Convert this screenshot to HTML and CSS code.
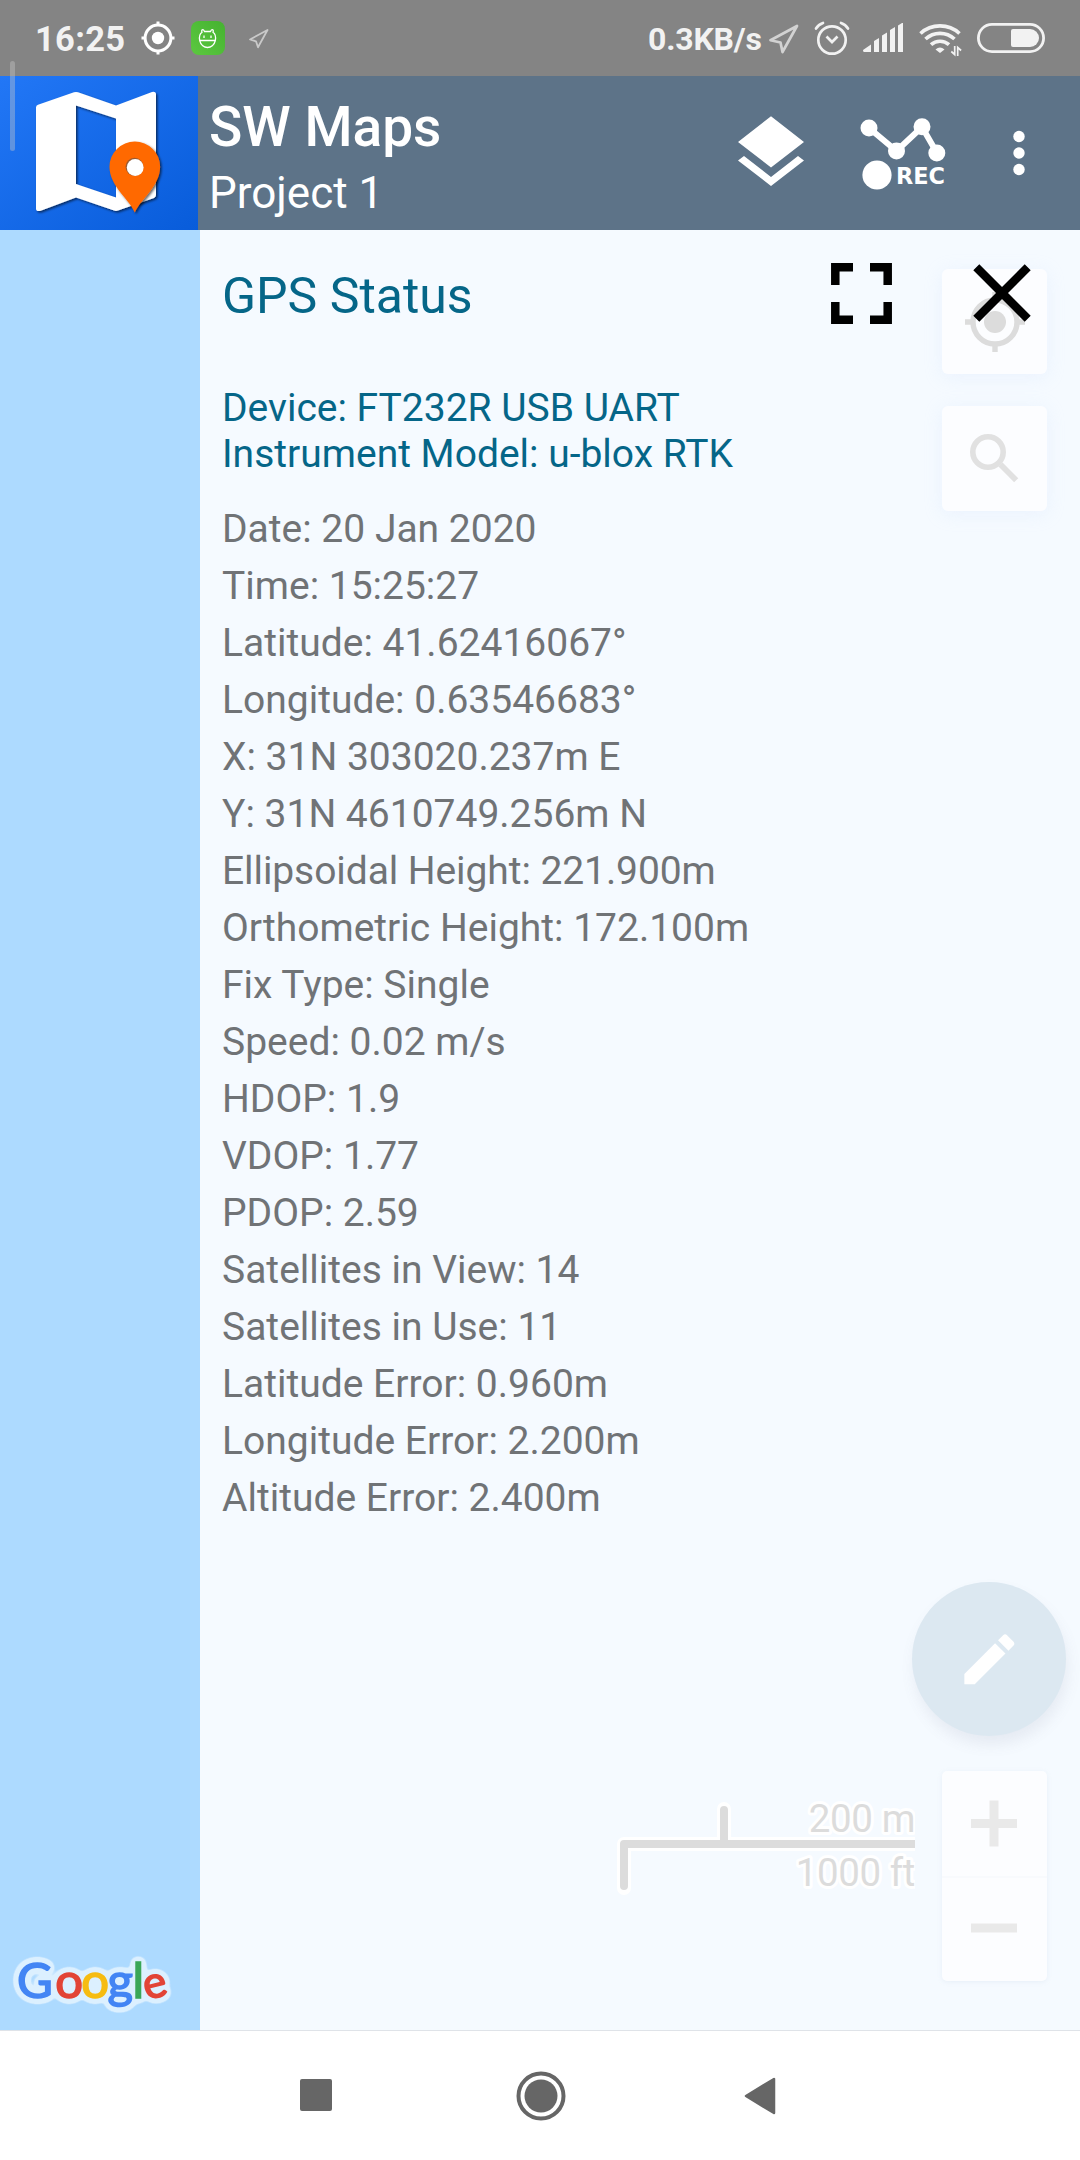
FILE: index.html
```html
<!DOCTYPE html>
<html lang="en">
<head>
<meta charset="utf-8">
<title>SW Maps</title>
<link rel="stylesheet" href="styles.css">
</head>
<body>
<div class="screen">
  <header class="status-bar">
    <span class="clock">16:25</span>
    <svg class="st-gps" viewBox="141 21 34 34"><g fill="none" stroke="#fff" stroke-width="3"><circle cx="158" cy="38" r="12.900"/><path d="M158 21.500v4.500M158 50v4.500M141.500 38h4.500M170 38h4.500"/></g><circle cx="158" cy="38" r="6.200" fill="#fff"/></svg>
    <svg class="st-app" viewBox="0 0 34 34"><defs><linearGradient id="green" x1="0" y1="1" x2="1" y2="0"><stop offset="0" stop-color="#5cc840"/><stop offset="1" stop-color="#45b230"/></linearGradient></defs><rect width="34" height="34" rx="8" fill="url(#green)"/><g fill="none" stroke="#fff" stroke-width="1.300"><path d="M8.700 19.500c-1-5 .8-7.200 2.300-8.300-.6-1.300-.3-2.500.8-2.500 1 0 1.200.7 1.700 1.800h6c.5-1.100.7-1.800 1.700-1.800 1.100 0 1.400 1.200.8 2.500 1.500 1.100 3.300 3.300 2.300 8.300-1 4.500-4.500 7-7.800 7s-6.800-2.500-7.800-7z"/><path d="M8.700 19.500h15.600M13 14.500v2.500M20 14.500v2.500"/></g></svg>
    <svg class="st-loc1" viewBox="248 28 22 22"><path d="M250 39.500L267.500 30 258 47.200 256 41.300z" fill="none" stroke="#c9c9c9" stroke-width="1.800" stroke-linejoin="round"/></svg>
    <span class="speed">0.3KB/s</span>
    <svg class="st-loc2" viewBox="768 23 32 32"><path d="M770.500 40.300L797 26 782.500 52 780.500 42.500z" fill="none" stroke="#d2d2d2" stroke-width="2.700" stroke-linejoin="round"/></svg>
    <svg class="st-alarm" viewBox="814 20 36 36"><g fill="none" stroke="#f2f2f2" stroke-width="2.700"><circle cx="832" cy="40" r="13.700"/><path d="M826.500 36.500l5.500 5.500 5.500-5.500"/><path stroke-linecap="round" d="M816 28.500q2.500-4 7-5.500M848 28.500q-2.500-4-7-5.500"/></g></svg>
    <svg class="st-signal" viewBox="863 22 41 31"><path fill="#f2f2f2" d="M863 50l8-5.500V52h-7q-1 0-1-2zM874 41l5-3v14h-5zM882 35.500l5-3V52h-5zM890 30l5-3v25h-5zM898 25.500l4-2.500h1v29h-5z"/></svg>
    <svg class="st-wifi" viewBox="919 22 43 35"><g fill="none" stroke="#f2f2f2" stroke-width="3.700"><path d="M920.500 33.500a29 29 0 0 1 39 0"/><path d="M925.500 39a21.500 21.500 0 0 1 29 0"/><path d="M931 44.700a13.500 13.500 0 0 1 18 0"/></g><path fill="#f2f2f2" d="M940 53l-4.500-3.500q4.500-4 9 0z"/><path d="M954.700 46v8.500l-3.400-3M957.700 56v-8.500l3.400 3" fill="none" stroke="#f2f2f2" stroke-width="1.700"/></svg>
    <svg class="st-battery" viewBox="977 23 68 30"><rect x="978.400" y="24.400" width="65.200" height="27.200" rx="13.600" fill="none" stroke="#f2f2f2" stroke-width="2.800"/><path fill="#f2f2f2" d="M1013 29h17a9 9 0 0 1 0 18h-17q-2 0-2-2v-14q0-2 2-2z"/></svg>
  </header>

  <div class="app-bar">
    <svg class="logo" viewBox="0 76 198 154">
      <defs><linearGradient id="blue" x1="0" y1="0" x2="1" y2="1"><stop offset="0" stop-color="#2277f6"/><stop offset="1" stop-color="#085cda"/></linearGradient>
      <filter id="drop" x="-20%" y="-20%" width="140%" height="140%"><feDropShadow dx="1.500" dy="1.500" stdDeviation="1" flood-color="#000" flood-opacity=".6"/></filter></defs>
      <rect y="76" width="198" height="154" fill="url(#blue)"/>
      <path filter="url(#drop)" fill="#fff" fill-rule="evenodd" d="M38 104.700L74 92.300q2-.6 4 0L116 105.500 152 92q4-.8 4 2.500V195q0 2.200-2 3L118 210.600q-2 .7-4 0L76 197.500 40 210.900q-4 .8-4-2.500V107.500q0-2.200 2-2.800zM76 105.500V184l40 13.500v-79z"/>
      <path filter="url(#drop)" fill="#ff6900" d="M134.800 212.500C129 199 109.500 186 109.500 166.800a25.300 25.300 0 0 1 50.600 0C160.100 186 141 199 134.800 212.500z"/>
      <circle cx="134.500" cy="166.800" r="9" fill="#9a5a30"/><circle cx="135.200" cy="167.500" r="8.400" fill="#fff"/>
    </svg>
    <div class="titles"><h1>SW Maps</h1><p>Project 1</p></div>
    <svg class="ic-layers" viewBox="738 116 66 70"><path fill="#fff" d="M771 116.300L804 142l-33 25.500L738 142zM738 160.500l6-4.500 27 21 27-21 6 4.500L771 186z"/></svg>
    <svg class="ic-rec" viewBox="860 117 88 74"><path d="M869 128l27.500 23L922 127l15 26" fill="none" stroke="#fff" stroke-width="6"/><g fill="#fff"><circle cx="869" cy="128" r="8.500"/><circle cx="896.500" cy="151" r="8.500"/><circle cx="922" cy="126.700" r="8.500"/><circle cx="936.800" cy="153" r="8.500"/><circle cx="877" cy="175" r="14.600"/><text x="896" y="184" class="rec-text" textLength="49">REC</text></g></svg>
    <svg class="ic-more" viewBox="1012 130 14 46"><g fill="#fff"><circle cx="1019" cy="136.500" r="5.700"/><circle cx="1019" cy="153" r="5.700"/><circle cx="1019" cy="169.500" r="5.700"/></g></svg>
  </div>

  <main class="map">
    <div class="map-strip">
      <svg class="google" viewBox="10 1950 175 70" aria-label="Google">
        <defs><filter id="halo" filterUnits="userSpaceOnUse" x="0" y="1940" width="200" height="90" color-interpolation-filters="sRGB">
          <feGaussianBlur in="SourceAlpha" stdDeviation="3.600"/>
          <feComponentTransfer result="spread"><feFuncA type="linear" slope="20" intercept="-.6"/></feComponentTransfer>
          <feFlood flood-color="#dcf0ff"/><feComposite in2="spread" operator="in" result="glow"/>
          <feMerge><feMergeNode in="glow"/><feMergeNode in="SourceGraphic"/></feMerge>
        </filter></defs>
        <text class="google-text" filter="url(#halo)" x="17 55.200 81.200 107.500 132.500 146.500" y="1997.500 1997.500 1997.500 1997.500 1997.500 2000" rotate="0 0 0 0 0 -14"><tspan class="g-blue">G</tspan><tspan class="g-red">o</tspan><tspan class="g-yellow">o</tspan><tspan class="g-blue">g</tspan><tspan class="g-green">l</tspan><tspan class="g-red g-e">e</tspan></text>
      </svg>
    </div>
    <section class="panel">
      <div class="panel-head">
        <h2>GPS Status</h2>
        <svg class="ic-full" viewBox="0 0 61 61"><path d="M4.300 22V4.300H22M39 4.300h17.700V22M56.700 39v17.700H39M22 56.700H4.300V39" fill="none" stroke="#000" stroke-width="8.500"/></svg>
        <svg class="ic-close" viewBox="0 0 58 58"><path d="M3.300 3.300l51.400 51.400M54.700 3.300L3.300 54.700" stroke="#000" stroke-width="8.500"/></svg>
      </div>
      <div class="device"><p>Device: FT232R USB UART</p><p>Instrument Model: u-blox RTK</p></div>
      <ul class="readings">
        <li>Date: 20 Jan 2020</li>
        <li>Time: 15:25:27</li>
        <li>Latitude: 41.62416067°</li>
        <li>Longitude: 0.63546683°</li>
        <li>X: 31N 303020.237m E</li>
        <li>Y: 31N 4610749.256m N</li>
        <li class="tight">Ellipsoidal Height: 221.900m</li>
        <li>Orthometric Height: 172.100m</li>
        <li>Fix Type: Single</li>
        <li>Speed: 0.02 m/s</li>
        <li>HDOP: 1.9</li>
        <li>VDOP: 1.77</li>
        <li>PDOP: 2.59</li>
        <li>Satellites in View: 14</li>
        <li>Satellites in Use: 11</li>
        <li>Latitude Error: 0.960m</li>
        <li>Longitude Error: 2.200m</li>
        <li>Altitude Error: 2.400m</li>
      </ul>
    </section>

    <div class="map-btn locate"><svg viewBox="942 269 105 105"><g fill="none" stroke="#dcdcdc" stroke-width="5.400"><circle cx="995" cy="322" r="22"/><path d="M995 292v7M995 345v7M965 322h7M1018 322h7"/></g><circle cx="995" cy="322" r="11" fill="#dcdcdc"/></svg></div>
    <div class="map-btn search"><svg viewBox="942 406 105 105"><g fill="none" stroke="#e1e1e1"><circle cx="988" cy="452" r="15.200" stroke-width="5.600"/><path d="M1000.500 464.500l15.700 15.700" stroke-width="5.800"/></g></svg></div>
    <div class="fab"><svg viewBox="0 0 24 24"><path fill="#fff" d="M3 17.250V21h3.750L17.810 9.940l-3.750-3.750L3 17.250zM20.710 7.040c.39-.39.39-1.020 0-1.410l-2.340-2.340c-.39-.39-1.020-.39-1.410 0l-1.830 1.830 3.750 3.750 1.830-1.830z"/></svg></div>
    <svg class="scale" viewBox="610 1796 305 100">
      <path class="bar-halo" d="M624 1888v-44h291M724 1844v-35"/>
      <g class="scale-text"><text x="915" y="1832">200 m</text><text x="915" y="1886">1000 ft</text></g>
      <path class="bar" d="M624 1886v-42h291M724 1844v-34"/>
    </svg>
    <div class="zoom"><svg viewBox="0 0 105 105"><path d="M29 52.500h46M52 29.500v46" stroke="#e9e9e9" stroke-width="9"/></svg><svg viewBox="0 0 105 105"><path d="M0 0h105" stroke="#f8fafd" stroke-width="4"/><path d="M29 52h46" stroke="#e9e9e9" stroke-width="9"/></svg></div>
  </main>

  <nav class="nav-bar">
    <svg class="nav-sq" viewBox="0 0 32 32"><rect width="32" height="32" rx="2" fill="#666"/></svg>
    <svg class="nav-home" viewBox="0 0 50 50"><circle cx="25" cy="25" r="22.500" fill="none" stroke="#666" stroke-width="4"/><circle cx="25" cy="25" r="16.500" fill="#666"/></svg>
    <svg class="nav-back" viewBox="0 0 32 38"><path d="M2 19L30 2v34z" fill="#666" stroke="#666" stroke-width="2.500" stroke-linejoin="round"/></svg>
  </nav>
  <div class="edge-handle"></div>
</div>
</body>
</html>
```
FILE: styles.css
```css
* { box-sizing: border-box; margin: 0; padding: 0; }
body { font-family: Roboto, "Liberation Sans", sans-serif; }
svg { display: block; flex: none; }
.screen { position: relative; width: 1080px; height: 2160px; display: flex; flex-direction: column; overflow: hidden; background: #fff; }

.status-bar { height: 76px; display: flex; align-items: flex-start; background: #848484; color: #f2f2f2; font-weight: 700; white-space: nowrap; }
.clock { width: 105px; padding-left: 35px; margin-top: 18px; font-size: 34.500px; letter-spacing: .3px; line-height: 42px; }
.st-gps { width: 34px; height: 34px; margin: 21px 16px 0 36px; }
.st-app { width: 34px; height: 34px; margin-top: 21px; }
.st-loc1 { width: 22px; height: 22px; margin: 28px 0 0 23px; }
.speed { margin: 19px 0 0 auto; width: 120px; font-size: 32px; letter-spacing: -.2px; line-height: 40px; }
.st-loc2 { width: 32px; height: 32px; margin-top: 23px; }
.st-alarm { width: 36px; height: 36px; margin: 20px 0 0 14px; }
.st-signal { width: 41px; height: 31px; margin: 22px 0 0 13px; }
.st-wifi { width: 43px; height: 35px; margin: 22px 0 0 15px; }
.st-battery { width: 68px; height: 30px; margin: 23px 35px 0 15px; }

.app-bar { height: 154px; display: flex; align-items: flex-start; background: #5d7388; color: #fff; }
.logo { width: 198px; height: 154px; }
.titles { flex: 1; padding: 19px 0 0 11px; white-space: nowrap; }
.titles h1 { font-size: 55px; font-weight: 500; line-height: 64px; }
.titles p { font-size: 44px; line-height: 50px; margin-top: 9px; }
.ic-layers { width: 66px; height: 70px; margin-top: 40px; }
.ic-rec { width: 88px; height: 74px; margin: 41px 0 0 56px; }
.ic-more { width: 14px; height: 46px; margin: 54px 54px 0 64px; }
.rec-text { font: 700 22.400px "DejaVu Sans", sans-serif; }

.map { position: relative; height: 1800px; display: flex; background: #addaff; }
.map-strip { width: 200px; display: flex; align-items: flex-end; }
.google { width: 175px; height: 70px; margin: 0 0 10px 10px; overflow: visible; }
.google-text { font: 400 49px Lato, sans-serif; stroke-width: 1.600px; }
.g-blue { fill: #4385f4; stroke: #4385f4; }
.g-red { fill: #e24436; stroke: #e24436; }
.g-yellow { fill: #f6bc12; stroke: #f6bc12; }
.g-green { fill: #3aa757; stroke: #3aa757; }
.g-e { font-size: 44px; }

.panel { flex: 1; padding: 33px 49px 0 22px; background: #f5faff; white-space: nowrap; }
.panel-head { position: relative; z-index: 2; display: flex; height: 62px; color: #056688; }
.panel-head h2 { flex: 1; font-size: 50px; font-weight: 400; line-height: 66px; }
.ic-full { width: 61px; height: 61px; }
.ic-close { width: 58px; height: 58px; margin: 1px 0 0 81px; }
.device { margin-top: 60px; color: #056688; font-size: 39px; line-height: 46px; }
.readings { list-style: none; margin-top: 24px; color: #707376; font-size: 39px; line-height: 57px; }
.tight { letter-spacing: -.08px; }

.map-btn { position: absolute; left: 942px; width: 105px; height: 105px; border-radius: 6px; background: #fcfdff; box-shadow: 0 3px 18px rgba(200, 220, 250, .22); }
.locate { top: 39px; }
.search { top: 176px; }
.fab { position: absolute; left: 912px; top: 1352px; width: 154px; height: 154px; border-radius: 50%; display: grid; place-items: center; background: #dce8f1; box-shadow: 2px 9px 14px rgba(110, 110, 140, .1); }
.fab svg { width: 66.700px; height: 66.700px; }
.scale { position: absolute; left: 610px; top: 1566px; width: 305px; height: 100px; }
.bar, .bar-halo { fill: none; stroke-linecap: round; stroke-linejoin: round; }
.bar { stroke: #dcdcdc; stroke-width: 8px; }
.bar-halo { stroke: #fff; stroke-width: 14px; }
.scale-text { font-size: 38.500px; letter-spacing: -.4px; text-anchor: end; fill: #dcdcdc; stroke: #fff; stroke-width: 6px; stroke-linejoin: round; paint-order: stroke; }
.zoom { position: absolute; left: 942px; top: 1541px; width: 105px; height: 210px; border-radius: 5px; background: #fcfdff; box-shadow: 0 1px 5px rgba(150, 170, 200, .13); }

.nav-bar { height: 130px; border-top: 1px solid #dfe3e8; background: #fff; display: flex; align-items: flex-start; }
.nav-sq { width: 32px; height: 32px; margin: 48px 0 0 300px; }
.nav-home { width: 50px; height: 50px; margin: 40px 0 0 183.500px; }
.nav-back { width: 32px; height: 38px; margin: 46px 0 0 178.500px; }
.edge-handle { position: absolute; left: 10px; top: 61px; width: 5px; height: 90px; border-radius: 3px; background: rgba(200, 200, 200, .4); }
```
